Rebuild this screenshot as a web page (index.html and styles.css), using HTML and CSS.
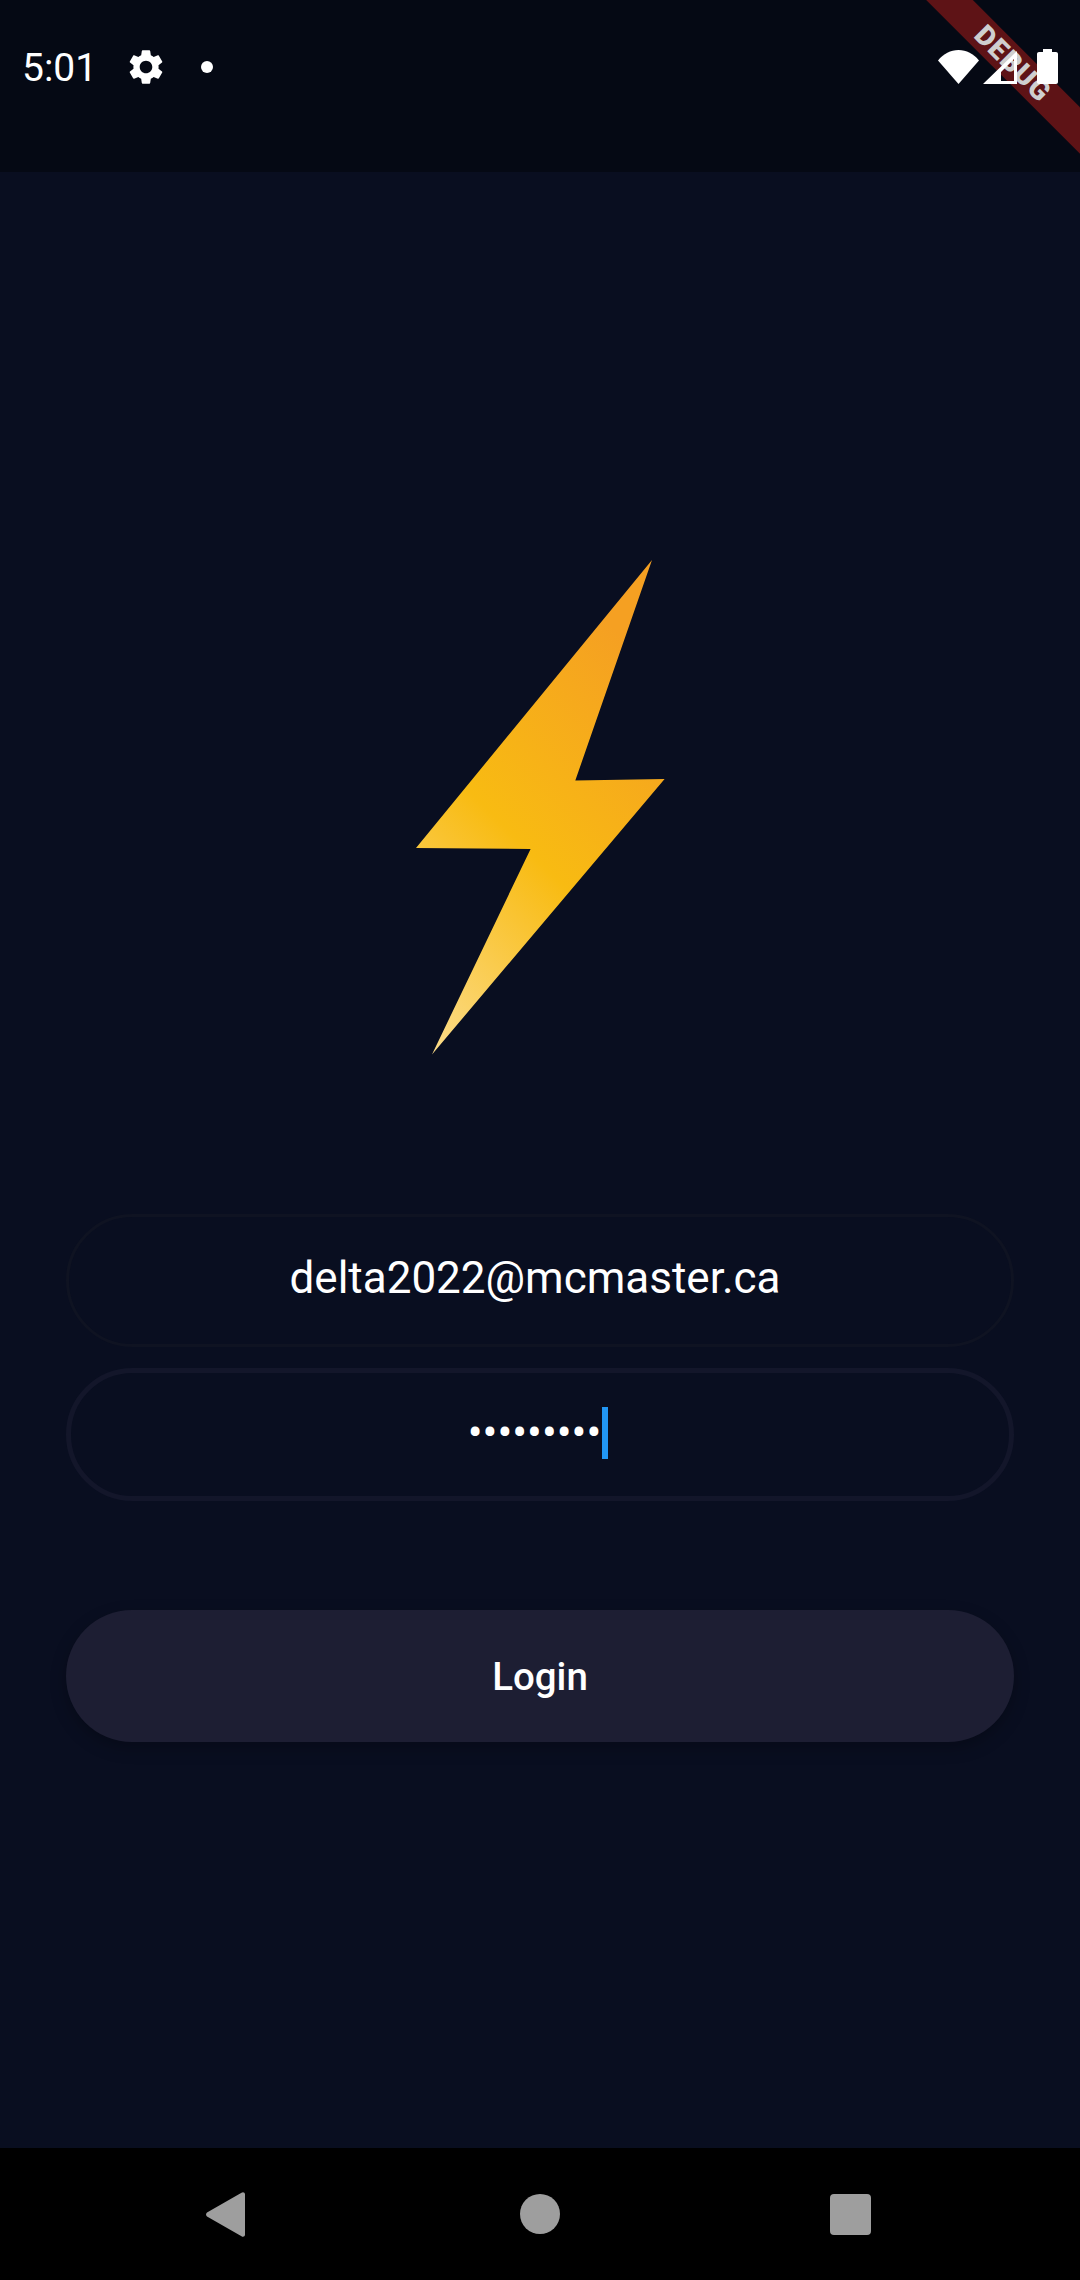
FILE: index.html
```html
<!DOCTYPE html>
<html lang="en">
<head>
    <meta charset="UTF-8">
    <meta name="viewport" content="width=device-width, initial-scale=1.0">
    <title>Login</title>
    <link rel="stylesheet" href="styles.css">
</head>
<body>
    <div class="phone">
        <!-- Status bar -->
        <div class="status-bar">
            <span class="clock">5:01</span>
            <svg class="gear" viewBox="0 0 24 24">
                <path d="M19.14 12.94c.04-.3.06-.61.06-.94 0-.32-.02-.64-.07-.94l2.03-1.58c.18-.14.23-.41.12-.61l-1.92-3.32c-.12-.22-.37-.29-.59-.22l-2.39.96c-.5-.38-1.03-.7-1.62-.94l-.36-2.54c-.04-.24-.24-.41-.48-.41h-3.84c-.24 0-.43.17-.47.41l-.36 2.54c-.59.24-1.13.57-1.62.94l-2.39-.96c-.22-.08-.47 0-.59.22L2.74 8.87c-.12.21-.08.47.12.61l2.03 1.58c-.05.3-.09.63-.09.94s.02.64.07.94l-2.03 1.58c-.18.14-.23.41-.12.61l1.92 3.32c.12.22.37.29.59.22l2.39-.96c.5.38 1.03.7 1.62.94l.36 2.54c.05.24.24.41.48.41h3.84c.24 0 .44-.17.47-.41l.36-2.54c.59-.24 1.13-.56 1.62-.94l2.39.96c.22.08.47 0 .59-.22l1.92-3.32c.12-.22.07-.47-.12-.61l-2.01-1.58zM12 15.6c-1.98 0-3.6-1.62-3.6-3.6s1.62-3.6 3.6-3.6 3.6 1.62 3.6 3.6-1.62 3.6-3.6 3.6z"/>
            </svg>
            <span class="notif-dot"></span>
            <div class="status-icons">
                <svg class="wifi" viewBox="0 0 41 34">
                    <path d="M0 10.5C5.5 3.8 12.6 0 20.5 0S35.500 3.800 41 10.500L20.500 34Z"/>
                </svg>
                <svg class="signal" viewBox="0 0 34 33">
                    <path fill-rule="evenodd" d="M34 0V33H0ZM31 8 18 21V30H31Z"/>
                </svg>
                <svg class="battery" viewBox="0 0 21 35">
                    <path d="M6 0H15V3H19C20.100 3 21 3.900 21 5V33C21 34.100 20.100 35 19 35H2C.9 35 0 34.100 0 33V5C0 3.900.9 3 2 3H6Z"/>
                </svg>
            </div>
        </div>

        <!-- Login form -->
        <div class="main">
            <svg class="logo" viewBox="0 0 249 495">
                <defs>
                    <linearGradient id="boltFill" gradientUnits="userSpaceOnUse" x1="16" y1="494" x2="373" y2="137">
                        <stop offset="0" stop-color="#fcdc8a"/>
                        <stop offset="0.42" stop-color="#f8bb12"/>
                        <stop offset="0.85" stop-color="#f5a022"/>
                    </linearGradient>
                </defs>
                <path fill="url(#boltFill)" d="M236 0 159.300 220.500 248.600 219 16 494.500 114.600 289 0 288Z"/>
            </svg>

            <div class="field field-email">
                <span>delta2022@mcmaster.ca</span>
            </div>
            <div class="field field-password">
                <span class="dots">•••••••••</span>
                <span class="caret"></span>
            </div>

            <button class="login-btn">Login</button>
        </div>

        <!-- Navigation bar -->
        <div class="nav-bar">
            <svg class="nav-back" viewBox="0 0 39 45">
                <path d="M35.500.8C37 -.3 39 .4 39 2.500V42.500C39 44.600 37 45.300 35.500 44.200L1 24.500C-.3 23.500 -.3 21.500 1 20.500Z"/>
            </svg>
            <span class="nav-home"></span>
            <span class="nav-recent"></span>
        </div>

        <!-- Flutter debug ribbon -->
        <div class="debug-ribbon"><span>DEBUG</span></div>
    </div>
</body>
</html>
```

FILE: styles.css
```css
* {
    margin: 0;
    padding: 0;
    box-sizing: border-box;
    font-family: 'Roboto', sans-serif;
}

body {
    background-color: #090e20;
    color: #fff;
}

.phone {
    position: relative;
    display: flex;
    flex-direction: column;
    width: 1080px;
    height: 2280px;
    overflow: hidden;
}

/* Status bar */
.status-bar {
    display: flex;
    align-items: flex-start;
    height: 172px;
    padding: 48px 22px 0 22px;
    background: #050914;
}

.clock {
    width: 75px;
    font-size: 39px;
    line-height: 40px;
    font-weight: 400;
}

.gear {
    width: 42px;
    height: 42px;
    margin: -2px 0 0 28px;
    fill: #fff;
}

.notif-dot {
    width: 12px;
    height: 12px;
    margin: 13px 0 0 34px;
    border-radius: 50%;
    background: #fff;
}

.status-icons {
    position: relative;
    z-index: 2;
    display: flex;
    align-items: flex-start;
    margin-left: auto;
    fill: #fff;
}

.wifi {
    width: 41px;
    height: 34px;
    margin-top: 2px;
}

.signal {
    width: 34px;
    height: 33px;
    margin: 3px 20px 0 4px;
}

.battery {
    width: 21px;
    height: 35px;
    margin-top: 1px;
}

/* Main */
.main {
    flex: 1;
    display: flex;
    flex-direction: column;
    align-items: center;
    padding-top: 388px;
}

.logo {
    width: 249px;
    height: 495px;
    margin-bottom: 159px;
}

.field {
    display: flex;
    align-items: center;
    justify-content: center;
    width: 948px;
    height: 133px;
    border-radius: 67px;
    font-size: 44px;
}

.field-email {
    padding: 0 10px 6px 0;
    border: 3px solid #0f1322;
    margin-bottom: 21px;
}

.field-password {
    padding: 0 4px 4px 0;
    border: 5px solid #13162a;
    margin-bottom: 109px;
}

.dots {
    line-height: 52px;
}

.caret {
    width: 6px;
    height: 52px;
    margin-left: 1px;
    background: #2196f3;
}

.login-btn {
    width: 948px;
    height: 132px;
    border: none;
    border-radius: 66px;
    background: #1d1e33;
    color: #fff;
    font-size: 38.500px;
    font-weight: 500;
    box-shadow: 0 6px 16px rgba(0, 0, 0, 0.25);
}

/* Navigation bar */
.nav-bar {
    position: relative;
    display: flex;
    align-items: flex-start;
    height: 132px;
    padding: 44px 0 0 206px;
    background: #000;
}

.nav-back {
    width: 39px;
    height: 45px;
    fill: #9e9e9e;
}

.nav-home {
    width: 40px;
    height: 40px;
    margin: 2px 0 0 275px;
    border-radius: 50%;
    background: #9e9e9e;
}

.nav-recent {
    width: 41px;
    height: 41px;
    margin: 2px 0 0 270px;
    border-radius: 4px;
    background: #9e9e9e;
}

/* Debug ribbon */
.debug-ribbon {
    position: absolute;
    top: 47px;
    left: 863px;
    z-index: 1;
    display: flex;
    align-items: center;
    justify-content: center;
    width: 300px;
    height: 33px;
    background: #5e1316;
    transform: rotate(45deg);
}

.debug-ribbon span {
    color: #cfcfcf;
    font-size: 28px;
    font-weight: 900;
    letter-spacing: 1px;
}
```
